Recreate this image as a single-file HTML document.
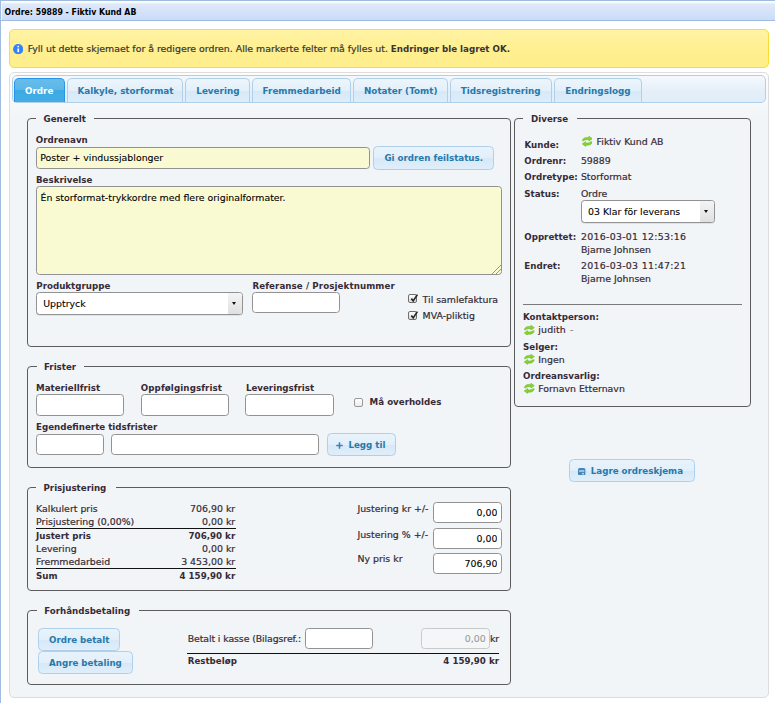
<!DOCTYPE html>
<html lang="no"><head><meta charset="utf-8"><title>Ordre: 59889 - Fiktiv Kund AB</title>
<style>
*{box-sizing:border-box}
html,body{margin:0;padding:0;background:#fff}
body{width:775px;height:703px;overflow:hidden;position:relative;font-family:"DejaVu Sans","Liberation Sans",sans-serif;font-size:9.4px;color:#362b36}
#win{position:absolute;left:0;top:0;width:775px;height:703px;border-left:1px solid #9fbbe0;overflow:hidden}
#win div,#win span,#win strong,#win label,#win a,#win ul,#win li,#win form,#win fieldset,#win button,#win input,#win select,#win textarea,#win svg,#win hr,#win h1{position:absolute;margin:0}
#win ul{list-style:none;padding:0}
#titlebar{left:0;top:0;width:775px;height:21px;border-top:1px solid #9fbbe0;border-bottom:1px solid #9fbbe0;box-shadow:inset 1px 0 0 #f4f8fd;background:linear-gradient(#ffffff 0,#f6f9fe 1.5px,#dfe9f8 3px,#c9dcf9 100%)}
#win .tt{left:3.6px;top:5px;font-family:"DejaVu Sans Condensed","Liberation Sans",sans-serif;font-weight:bold;font-size:8.7px;line-height:12px;color:#000;white-space:nowrap}
.t{white-space:nowrap;line-height:12px;font-size:9.4px;font-weight:normal;-webkit-text-stroke:.2px;color:inherit;text-decoration:none}
.t.b{font-weight:bold;font-size:8.7px;-webkit-text-stroke:0}
.msg{border:1px solid #f9dd34;border-radius:5px;background:linear-gradient(#fff3a4,#ffef8f 60%,#ffee8c)}
.tabs{border:1px solid #ddd;border-radius:5px;background:linear-gradient(#fdfdfe 0,#f2f5f7 45px,#f2f5f7 100%)}
.nav{border:1px solid #aed0ea;border-radius:5px;background:linear-gradient(#f5f9fd 0,#e3eef8 62%,#e1edf8 100%)}
.tab{border:1px solid #aed0ea;border-bottom:none;border-radius:5px 5px 0 0;background:linear-gradient(#ecf5fc 0,#e3f0fa 50%,#d7e9f8 53%,#ddedf9 100%)}
.tab.act{border-color:#2694e8;background:linear-gradient(#68bdea 0,#5ab6e8 49%,#3baae3 50%,#44aee5 100%)}
#win .tabt,#win .bt{color:#2779aa}
#win .actt{color:#fff}
.panel{background:none}
.fs{border:1px solid #5c5c5c;border-radius:4px;padding:0;min-width:0}
.fs>legend{display:block;height:11px;line-height:13px;padding:0;font-size:8.7px;font-weight:bold;white-space:nowrap;color:#362b36}
.inp,.sel{border:1px solid #929292;border-radius:3.5px;background:#fff;font-family:"DejaVu Sans","Liberation Sans",sans-serif;font-size:9.4px;line-height:12px;color:#000;-webkit-text-stroke:.1px;outline:none;box-shadow:none;-webkit-appearance:none;appearance:none}
.inp.y{background:#fafad2}
.inp.ta{resize:none;overflow:hidden;white-space:nowrap}
.inp.dis{border-color:#c9c9c9;background:#f4f6f8;color:#9a9a9a;-webkit-text-fill-color:#9a9a9a;opacity:1}
.sel{box-shadow:0 .5px 0 rgba(0,0,0,.15);border-radius:3.5px}
.arr{background:linear-gradient(#f4f4f4,#e0e0e0);border-radius:0 2.5px 2.5px 0;pointer-events:none}
.arr i{position:absolute;left:50%;top:50%;margin:-1.5px 0 0 -2.7px;border:2.7px solid transparent;border-top:3.2px solid #111;border-bottom:none;width:0;height:0}
.btn{border:1px solid #aed0ea;border-radius:4.5px;padding:0;font:inherit;color:#2779aa;background:linear-gradient(#e8f3fb 0,#e2effa 50%,#d6e8f7 53%,#e0eefa 100%)}
.cb{-webkit-appearance:none;appearance:none;width:9px;height:9px;padding:0;border:1px solid #6e6e6e;border-radius:2px;background:linear-gradient(#fdfdfd,#dedede)}
.cb.off{border-color:#999;background:linear-gradient(#fff,#ececec)}
.t em{font-style:normal;color:#8d8790;margin-left:1px}
.hr{height:1px;border:0;background:#7a7a7a}
.ln{height:1.2px;background:#111}
</style></head>
<body>
<div id="win">
<div id="titlebar"><h1 class="tt">Ordre: 59889 - Fiktiv Kund AB</h1></div>
<div class="msg" role="status" style="left:8px;top:29px;width:760px;height:39px;">
<svg class="ic" style="left:3px;top:13.5px" width="10.4" height="10.4" viewBox="0 0 10.4 10.4"><circle cx="5.2" cy="5.2" r="5.1" fill="#3381fb"/><rect x="4.4" y="1.8" width="1.7" height="1.5" fill="#fff"/><rect x="4.4" y="4.5" width="1.7" height="3.7" fill="#fff"/></svg>
<span class="t" style="left:17.7px;top:13px;color:#363636">Fyll ut dette skjemaet for å redigere ordren. Alle markerte felter må fylles ut. </span>
<strong class="t b" style="left:380.8px;top:13px;color:#363636">Endringer ble lagret OK.</strong>
</div>
<div class="tabs" style="left:8px;top:72px;width:760px;height:626px;">
<ul class="nav" style="left:2px;top:2px;width:754px;height:28px;">
<li class="tab act" style="left:1px;top:2px;width:51px;height:24px">
<a class="t b tabt actt" style="left:10px;top:6px;font-size:8.8px">Ordre</a>
</li>
<li class="tab" style="left:54px;top:2px;width:116px;height:24px">
<a class="t b tabt" style="left:9.4px;top:6px;font-size:8.8px">Kalkyle, storformat</a>
</li>
<li class="tab" style="left:172px;top:2px;width:65px;height:24px">
<a class="t b tabt" style="left:10.3px;top:6px;font-size:8.8px">Levering</a>
</li>
<li class="tab" style="left:239px;top:2px;width:99px;height:24px">
<a class="t b tabt" style="left:9.6px;top:6px;font-size:8.8px">Fremmedarbeid</a>
</li>
<li class="tab" style="left:340px;top:2px;width:95px;height:24px">
<a class="t b tabt" style="left:10px;top:6px;font-size:8.8px">Notater (Tomt)</a>
</li>
<li class="tab" style="left:437px;top:2px;width:102px;height:24px">
<a class="t b tabt" style="left:9.8px;top:6px;font-size:8.8px">Tidsregistrering</a>
</li>
<li class="tab" style="left:541px;top:2px;width:88px;height:24px">
<a class="t b tabt" style="left:10.2px;top:6px;font-size:8.8px">Endringslogg</a>
</li>
</ul>
<form class="panel" style="left:0px;top:30px;width:758px;height:594px;">
<fieldset class="fs" style="left:17px;top:10px;width:484px;height:234px">
<legend style="margin-left:7.9px;width:58.3px;padding-left:7.7px">Generelt</legend>
<label class="t b" style="left:7.8px;top:10px;">Ordrenavn</label>
<input type="text" class="inp y" value="Poster + vindussjablonger" style="left:8px;top:23px;width:334px;height:22px;padding:3px 0 5px 3.2px;">
<button class="btn" type="button" style="left:345px;top:22px;width:121px;height:24px;">
<span class="t b bt" style="left:10.4px;top:5px;">Gi ordren feilstatus.</span>
</button>
<label class="t b" style="left:8px;top:50px;">Beskrivelse</label>
<textarea class="inp y ta" style="left:8px;top:62px;width:466px;height:89px;padding:5px 0 70px 3.6px;">Én storformat-trykkordre med flere originalformater.</textarea>
<svg class="grip" style="left:462.5px;top:139.5px" width="11" height="11" viewBox="0 0 11 11"><path d="M10.5 0.5L0.5 10.5M10.5 4.5L4.5 10.5" stroke="#9a9a8c" stroke-width="1"/></svg>
<label class="t b" style="left:8.3px;top:156px;">Produktgruppe</label>
<select class="sel" style="left:8px;top:168px;width:207px;height:23px;padding:5px 0 4px 6.2px"><option selected>Upptryck</option></select>
<span class="arr" style="left:199.9px;top:169px;width:14.1px;height:21px"><i></i></span>
<label class="t b" style="left:224.4px;top:156px;letter-spacing:.09px">Referanse / Prosjektnummer</label>
<input type="text" class="inp" style="left:224px;top:168px;width:88px;height:21px;">
<input type="checkbox" id="c1" class="cb" checked style="left:380px;top:170px">
<svg class="ic" viewBox="0 0 10 10" width="10" height="10" style="left:380.5px;top:169px"><path d="M2.3 5.6L4.2 7.9L8.4 1.6" fill="none" stroke="#2a2a2a" stroke-width="1.7"/></svg>
<label class="t" for="c1" style="left:394.6px;top:170px;">Til samlefaktura</label>
<input type="checkbox" id="c2" class="cb" checked style="left:380px;top:187px">
<svg class="ic" viewBox="0 0 10 10" width="10" height="10" style="left:380.5px;top:186px"><path d="M2.3 5.6L4.2 7.9L8.4 1.6" fill="none" stroke="#2a2a2a" stroke-width="1.7"/></svg>
<label class="t" for="c2" style="left:394.6px;top:186px;">MVA-pliktig</label>
</fieldset>
<fieldset class="fs" style="left:504px;top:10px;width:237px;height:294px">
<legend style="margin-left:8.1px;width:53.7px;padding-left:8px">Diverse</legend>
<span class="t b" style="left:9.5px;top:15px;">Kunde:</span>
<svg class="ic" style="left:66.7px;top:12px" width="10.6" height="10.6" viewBox="0 0 16 16"><g fill="#82d824" stroke="#58a010" stroke-width=".6" stroke-linejoin="round"><path d="M0.6 7.3C0.8 4.2 3.6 2.1 7 2.1L10.4 2.1L10.4 0.3L15.7 4L10.4 7.7L10.4 5.5L7.6 5.5C5.4 5.5 3.6 6.2 2.8 7.3Z"/><path d="M0.6 7.3C0.8 4.2 3.6 2.1 7 2.1L10.4 2.1L10.4 0.3L15.7 4L10.4 7.7L10.4 5.5L7.6 5.5C5.4 5.5 3.6 6.2 2.8 7.3Z" transform="rotate(180 8 8)"/></g></svg>
<span class="t" style="left:81.6px;top:12px;">Fiktiv Kund AB</span>
<span class="t b" style="left:9.3px;top:31px;">Ordrenr:</span>
<span class="t" style="left:65.9px;top:31px;">59889</span>
<span class="t b" style="left:9.3px;top:47px;">Ordretype:</span>
<span class="t" style="left:65.9px;top:47px;">Storformat</span>
<span class="t b" style="left:9.3px;top:64px;">Status:</span>
<span class="t" style="left:65.9px;top:64px;">Ordre</span>
<select class="sel" style="left:66px;top:76px;width:134px;height:23px;padding:5px 0 4px 6px"><option selected>03 Klar för leverans</option></select>
<span class="arr" style="left:184.8px;top:77px;width:14.2px;height:21px"><i></i></span>
<span class="t b" style="left:9.3px;top:107px;">Opprettet:</span>
<span class="t" style="left:65.9px;top:107px;letter-spacing:.3px">2016-03-01 12:53:16</span>
<span class="t" style="left:65.9px;top:120px;">Bjarne Johnsen</span>
<span class="t b" style="left:9.3px;top:136px;">Endret:</span>
<span class="t" style="left:65.9px;top:136px;letter-spacing:.3px">2016-03-03 11:47:21</span>
<span class="t" style="left:65.9px;top:149px;">Bjarne Johnsen</span>
<hr class="hr" style="left:8px;top:180px;width:219px">
<span class="t b" style="left:8px;top:187px;">Kontaktperson:</span>
<svg class="ic" style="left:9px;top:200.6px" width="10.6" height="10.6" viewBox="0 0 16 16"><g fill="#82d824" stroke="#58a010" stroke-width=".6" stroke-linejoin="round"><path d="M0.6 7.3C0.8 4.2 3.6 2.1 7 2.1L10.4 2.1L10.4 0.3L15.7 4L10.4 7.7L10.4 5.5L7.6 5.5C5.4 5.5 3.6 6.2 2.8 7.3Z"/><path d="M0.6 7.3C0.8 4.2 3.6 2.1 7 2.1L10.4 2.1L10.4 0.3L15.7 4L10.4 7.7L10.4 5.5L7.6 5.5C5.4 5.5 3.6 6.2 2.8 7.3Z" transform="rotate(180 8 8)"/></g></svg>
<span class="t" style="left:23.3px;top:200px;letter-spacing:.15px">judith <em>-</em></span>
<span class="t b" style="left:8px;top:217px;">Selger:</span>
<svg class="ic" style="left:9px;top:230px" width="10.6" height="10.6" viewBox="0 0 16 16"><g fill="#82d824" stroke="#58a010" stroke-width=".6" stroke-linejoin="round"><path d="M0.6 7.3C0.8 4.2 3.6 2.1 7 2.1L10.4 2.1L10.4 0.3L15.7 4L10.4 7.7L10.4 5.5L7.6 5.5C5.4 5.5 3.6 6.2 2.8 7.3Z"/><path d="M0.6 7.3C0.8 4.2 3.6 2.1 7 2.1L10.4 2.1L10.4 0.3L15.7 4L10.4 7.7L10.4 5.5L7.6 5.5C5.4 5.5 3.6 6.2 2.8 7.3Z" transform="rotate(180 8 8)"/></g></svg>
<span class="t" style="left:23.3px;top:230px;">Ingen</span>
<span class="t b" style="left:8px;top:246px;">Ordreansvarlig:</span>
<svg class="ic" style="left:9px;top:259px" width="10.6" height="10.6" viewBox="0 0 16 16"><g fill="#82d824" stroke="#58a010" stroke-width=".6" stroke-linejoin="round"><path d="M0.6 7.3C0.8 4.2 3.6 2.1 7 2.1L10.4 2.1L10.4 0.3L15.7 4L10.4 7.7L10.4 5.5L7.6 5.5C5.4 5.5 3.6 6.2 2.8 7.3Z"/><path d="M0.6 7.3C0.8 4.2 3.6 2.1 7 2.1L10.4 2.1L10.4 0.3L15.7 4L10.4 7.7L10.4 5.5L7.6 5.5C5.4 5.5 3.6 6.2 2.8 7.3Z" transform="rotate(180 8 8)"/></g></svg>
<span class="t" style="left:23.3px;top:259px;">Fornavn Etternavn</span>
</fieldset>
<button class="btn" type="button" style="left:559px;top:356px;width:126px;height:23px;">
<svg class="ic" style="left:8.2px;top:7.7px" width="7.4" height="7.4" viewBox="0 0 8 8"><rect x="0" y="0" width="8" height="8" rx="1.7" fill="#4686bb"/><rect x="1.2" y="2.6" width="5.6" height="1.3" fill="#d7ebf9"/><rect x="4.6" y="5.3" width="1.6" height="1.7" fill="#d7ebf9"/></svg>
<span class="t b bt" style="left:20.8px;top:5px;">Lagre ordreskjema</span>
</button>
<fieldset class="fs" style="left:17px;top:258px;width:484px;height:107px">
<legend style="margin-left:8.8px;width:47.7px;padding-left:7.2px">Frister</legend>
<label class="t b" style="left:8px;top:10px;">Materiellfrist</label>
<input type="text" class="inp" style="left:8px;top:22px;width:88px;height:22px;">
<label class="t b" style="left:112.8px;top:10px;letter-spacing:.1px">Oppfølgingsfrist</label>
<input type="text" class="inp" style="left:113px;top:22px;width:88px;height:22px;">
<label class="t b" style="left:217.9px;top:10px;">Leveringsfrist</label>
<input type="text" class="inp" style="left:217px;top:22px;width:89px;height:22px;">
<input type="checkbox" id="c3" class="cb off" style="left:326px;top:26px">
<label class="t b" for="c3" style="left:341.6px;top:24px;">Må overholdes</label>
<label class="t b" style="left:8px;top:49px;">Egendefinerte tidsfrister</label>
<input type="text" class="inp" style="left:8px;top:62px;width:68px;height:21px;">
<input type="text" class="inp" style="left:83px;top:62px;width:208px;height:21px;">
<button class="btn" type="button" style="left:299px;top:61px;width:69px;height:23px;">
<svg class="ic" style="left:7.8px;top:7.9px" width="7" height="7" viewBox="0 0 7 7"><path d="M3.5 0.3V6.7M0.3 3.5H6.7" stroke="#3d80b3" stroke-width="1.5"/></svg>
<span class="t b bt" style="left:20.4px;top:5px;">Legg til</span>
</button>
</fieldset>
<fieldset class="fs" style="left:17px;top:379px;width:484px;height:109px">
<legend style="margin-left:8.1px;width:79.7px;padding-left:7.4px">Prisjustering</legend>
<span class="t" style="left:8.1px;top:10px;">Kalkulert pris</span>
<span class="t" style="left:87.2px;width:120px;text-align:right;top:10px;">706,90 kr</span>
<span class="t" style="left:8.1px;top:23px;">Prisjustering (0,00%)</span>
<span class="t" style="left:87.2px;width:120px;text-align:right;top:23px;">0,00 kr</span>
<span class="t b" style="left:8.1px;top:37px;">Justert pris</span>
<span class="t b" style="left:87.2px;width:120px;text-align:right;top:37px;">706,90 kr</span>
<span class="t" style="left:8.1px;top:50px;">Levering</span>
<span class="t" style="left:87.2px;width:120px;text-align:right;top:50px;">0,00 kr</span>
<span class="t" style="left:8.1px;top:63px;">Fremmedarbeid</span>
<span class="t" style="left:87.2px;width:120px;text-align:right;top:63px;">3 453,00 kr</span>
<span class="t b" style="left:8.1px;top:77px;">Sum</span>
<span class="t b" style="left:87.2px;width:120px;text-align:right;top:77px;">4 159,90 kr</span>
<div class="ln" style="left:7.5px;top:35.1px;width:200px"></div>
<div class="ln" style="left:7.5px;top:74.8px;width:200px"></div>
<label class="t" style="left:329.4px;top:10px;">Justering kr +/-</label>
<input type="text" class="inp" value="0,00" style="left:405px;top:9px;width:69px;height:21px;padding:3px 3.6px 4px 0;text-align:right;">
<label class="t" style="left:329.4px;top:36px;">Justering % +/-</label>
<input type="text" class="inp" value="0,00" style="left:405px;top:35px;width:69px;height:21px;padding:3px 3.6px 4px 0;text-align:right;">
<label class="t" style="left:329.4px;top:60px;">Ny pris kr</label>
<input type="text" class="inp" value="706,90" style="left:405px;top:60px;width:69px;height:21px;padding:3px 3.6px 4px 0;text-align:right;">
</fieldset>
<fieldset class="fs" style="left:17px;top:502px;width:484px;height:80px">
<legend style="margin-left:9.1px;width:102.3px;padding-left:7.1px">Forhåndsbetaling</legend>
<button class="btn" type="button" style="left:10px;top:12px;width:82px;height:23px;">
<span class="t b bt" style="left:10px;top:5px;">Ordre betalt</span>
</button>
<button class="btn" type="button" style="left:10px;top:35px;width:95px;height:23px;">
<span class="t b bt" style="left:10px;top:5px;">Angre betaling</span>
</button>
<label class="t" style="left:159.7px;top:17px;letter-spacing:-.1px">Betalt i kasse (Bilagsref.:</label>
<input type="text" class="inp" style="left:277px;top:12px;width:68px;height:21px;">
<input type="text" class="inp dis" disabled value="0,00" style="left:393px;top:12px;width:69px;height:21px;padding:3px 3.3px 4px 0;text-align:right;">
<span class="t" style="left:461.9px;top:17px;">kr</span>
<div class="ln" style="left:159.1px;top:37px;width:312px"></div>
<span class="t b" style="left:159.7px;top:39px;">Restbeløp</span>
<span class="t b" style="left:351px;width:120px;text-align:right;top:39px;">4 159,90 kr</span>
</fieldset>
</form>
</div>
</div>
</body></html>
